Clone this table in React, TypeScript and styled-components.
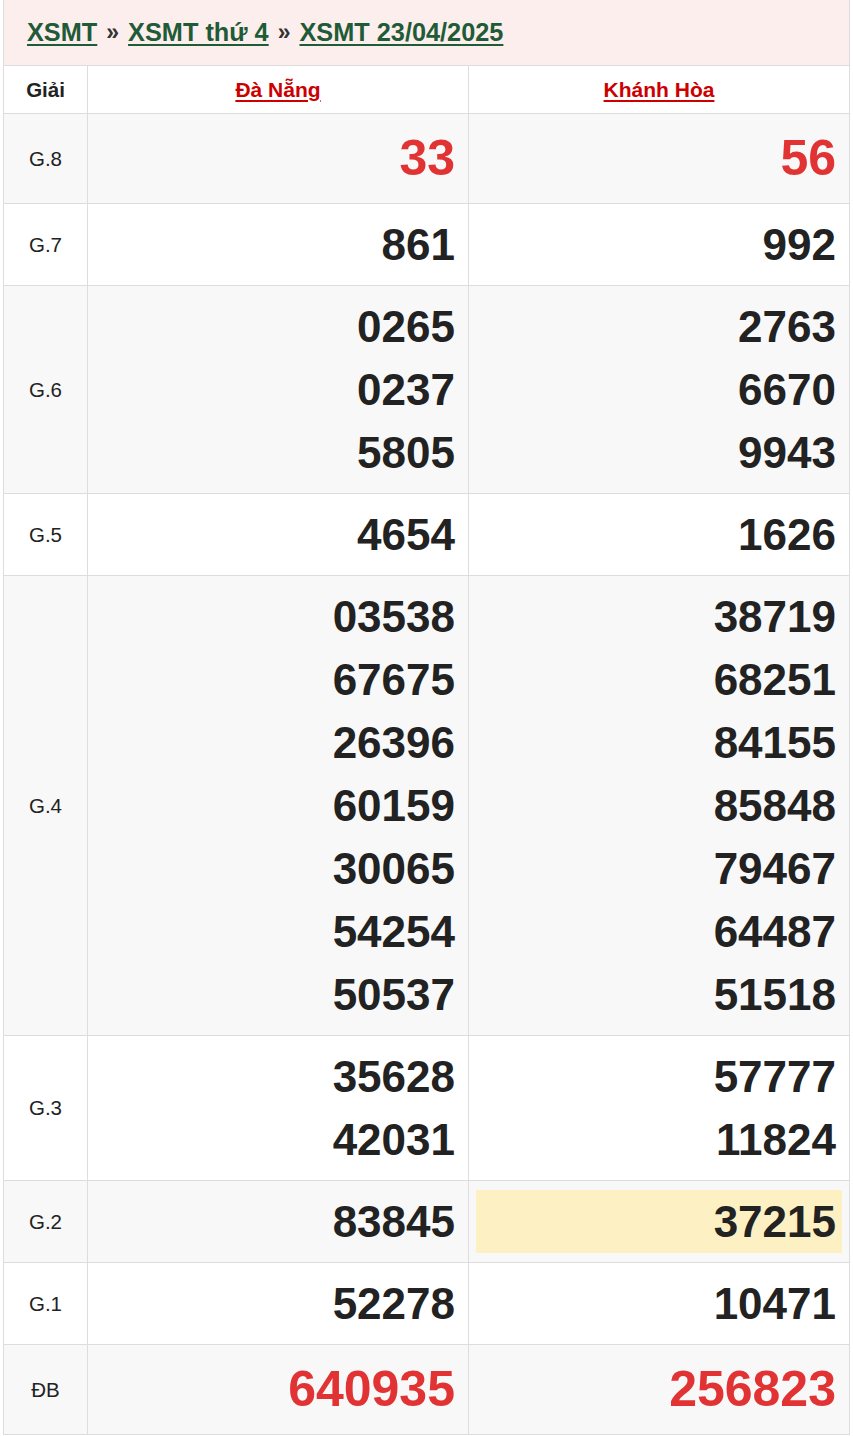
import React from 'react';
import styled, { createGlobalStyle } from 'styled-components';

const GlobalStyle = createGlobalStyle`
  html, body { margin: 0; padding: 0; background: #fff; }
  body { font-family: "Liberation Sans", Arial, sans-serif; color: #222; }
`;

const Page = styled.div`
  padding: 0 3px;
`;

const Crumbs = styled.div`
  height: 65px;
  box-sizing: border-box;
  background: #fdeeee;
  border-left: 1px solid #ddd;
  border-right: 1px solid #ddd;
  padding: 0 23px;
  display: flex;
  align-items: center;
  gap: 9px;
  font-size: 25.3px;
  font-weight: 700;
`;

const Crumb = styled.a`
  color: #1e5b36;
  text-decoration: underline;
  text-underline-offset: 3px;
`;

const Sep = styled.span`
  color: #333;
  font-size: 23px;
`;

const Table = styled.table`
  width: 100%;
  border-collapse: collapse;
  table-layout: fixed;
`;

const Th = styled.th`
  height: 47px;
  border: 1px solid #ddd;
  font-size: 20.5px;
  font-weight: 700;
  color: #222;
  background: #fff;
  padding: 0;
`;

const Province = styled.a`
  color: #cc0000;
  font-size: 21px;
  text-decoration: underline;
  text-underline-offset: 3px;
`;

const Row = styled.tr<{ $alt: boolean }>`
  background: ${({ $alt }) => ($alt ? '#f8f8f8' : '#fff')};
`;

const Label = styled.td`
  border: 1px solid #ddd;
  text-align: center;
  font-size: 20.5px;
  color: #222;
  padding: 0;
`;

const Cell = styled.td`
  border: 1px solid #ddd;
  padding: 9px 7px;
  vertical-align: middle;
`;

const Num = styled.div<{ $big?: boolean; $red?: boolean; $hl?: boolean }>`
  text-align: right;
  padding-right: 6px;
  font-weight: 700;
  font-size: ${({ $big }) => ($big ? '50px' : '44px')};
  line-height: ${({ $big }) => ($big ? '71px' : '63px')};
  color: ${({ $red }) => ($red ? '#e13333' : '#222')};
  background: ${({ $hl }) => ($hl ? '#fdf1c3' : 'transparent')};
`;

type Prize = {
  label: string;
  a: string[];
  b: string[];
  big?: boolean;
  red?: boolean;
  hlB?: number;
};

const prizes: Prize[] = [
  { label: 'G.8', a: ['33'], b: ['56'], big: true, red: true },
  { label: 'G.7', a: ['861'], b: ['992'] },
  { label: 'G.6', a: ['0265', '0237', '5805'], b: ['2763', '6670', '9943'] },
  { label: 'G.5', a: ['4654'], b: ['1626'] },
  {
    label: 'G.4',
    a: ['03538', '67675', '26396', '60159', '30065', '54254', '50537'],
    b: ['38719', '68251', '84155', '85848', '79467', '64487', '51518'],
  },
  { label: 'G.3', a: ['35628', '42031'], b: ['57777', '11824'] },
  { label: 'G.2', a: ['83845'], b: ['37215'], hlB: 0 },
  { label: 'G.1', a: ['52278'], b: ['10471'] },
  { label: 'ĐB', a: ['640935'], b: ['256823'], big: true, red: true },
];

export default function App() {
  return (
    <Page>
      <GlobalStyle />
      <Crumbs>
        <Crumb>XSMT</Crumb>
        <Sep>»</Sep>
        <Crumb>XSMT thứ 4</Crumb>
        <Sep>»</Sep>
        <Crumb>XSMT 23/04/2025</Crumb>
      </Crumbs>
      <Table>
        <colgroup>
          <col style={{ width: 84 }} />
          <col />
          <col />
        </colgroup>
        <thead>
          <tr>
            <Th>Giải</Th>
            <Th><Province>Đà Nẵng</Province></Th>
            <Th><Province>Khánh Hòa</Province></Th>
          </tr>
        </thead>
        <tbody>
          {prizes.map((p, i) => (
            <Row key={p.label} $alt={i % 2 === 0}>
              <Label>{p.label}</Label>
              <Cell>
                {p.a.map((n, j) => (
                  <Num key={j} $big={p.big} $red={p.red}>{n}</Num>
                ))}
              </Cell>
              <Cell>
                {p.b.map((n, j) => (
                  <Num key={j} $big={p.big} $red={p.red} $hl={p.hlB === j}>{n}</Num>
                ))}
              </Cell>
            </Row>
          ))}
        </tbody>
      </Table>
    </Page>
  );
}
